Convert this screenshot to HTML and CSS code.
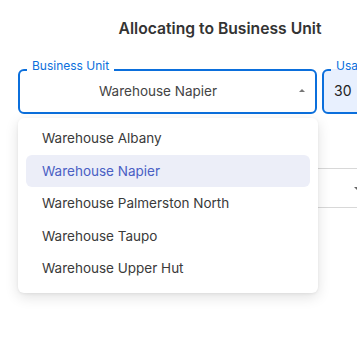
FILE: index.html
```html
<!DOCTYPE html>
<html lang="en">
<head>
  <meta charset="UTF-8" />
  <meta name="viewport" content="width=device-width, initial-scale=1.0" />
  <title>Allocate</title>
  <link rel="stylesheet" href="styles.css">
</head>
<body>
  <div class="page">
    <div class="dialog">
      <h2 class="title">Allocating to Business Unit</h2>
      <div class="fields">
        <fieldset class="field field-unit">
          <legend>Business Unit</legend>
          <div class="value">Warehouse Napier</div>
          <span class="arrow-up"></span>
        </fieldset>
        <fieldset class="field field-usage">
          <legend>Usage</legend>
          <div class="value">30</div>
        </fieldset>

        <ul class="menu">
          <li>Warehouse Albany</li>
          <li class="selected">Warehouse Napier</li>
          <li>Warehouse Palmerston North</li>
          <li>Warehouse Taupo</li>
          <li>Warehouse Upper Hut</li>
        </ul>
      </div>
      <div class="line-row">
        <span class="arrow-down"></span>
      </div>
    </div>
  </div>
</body>
</html>
```

FILE: styles.css
```css
body {
  margin: 0;
  background: #fff;
  font-family: Inter, "Noto Sans", sans-serif;
  color: #333;
}
.page {
  width: 100vw;
  height: 100vh;
  overflow: hidden;
}
.dialog {
  width: 404px;
  padding-left: 18px;
}
.title {
  margin: 0;
  padding-top: 19px;
  height: 20px;
  line-height: 20px;
  text-align: center;
  font-size: 15.7px;
  font-weight: 600;
  color: #333;
}
.fields {
  position: relative;
  display: flex;
  gap: 5px;
  margin-top: 20px;
}
.field {
  margin: 0;
  height: 55px;
  box-sizing: border-box;
  border: 2px solid #0b6fdc;
  border-radius: 6px;
  padding: 0 10px 12px;
  display: flex;
  align-items: center;
}
.field legend {
  font-size: 12px;
  line-height: 14px;
  color: #0b6fdc;
  padding: 0 5px 8px;
  margin-left: -3px;
}
.field-unit {
  width: 299px;
}
.field-unit .value {
  flex: 1;
  margin-right: 13px;
  text-align: center;
  font-size: 13.5px;
  color: #444;
}
.field-usage {
  width: 90px;
  background: #e8f0fe;
}
.field-usage .value {
  font-size: 14px;
  color: #222;
}
.arrow-up {
  border-left: 3px solid transparent;
  border-right: 3px solid transparent;
  border-bottom: 3px solid #777;
}
.menu {
  position: absolute;
  top: 59px;
  left: 0;
  width: 300px;
  box-sizing: border-box;
  margin: 0;
  padding: 4px 8px 8px;
  list-style: none;
  background: #fff;
  border-radius: 6px;
  box-shadow: 0 4px 14px rgba(0, 0, 0, 0.12), 0 1px 3px rgba(0, 0, 0, 0.06);
  z-index: 2;
}
.menu li {
  height: 32.5px;
  line-height: 32.5px;
  padding-left: 16px;
  font-size: 13.5px;
  color: #3a3a3a;
  border-radius: 6px;
}
.menu li.selected {
  background: #eceef8;
  color: #4a5fc4;
}
.line-row {
  margin-top: 54px;
  height: 38px;
  border-top: 1px solid #d8d8d8;
  border-bottom: 1px solid #d8d8d8;
  display: flex;
  align-items: center;
  padding-left: 336px;
}
.arrow-down {
  border-left: 3px solid transparent;
  border-right: 3px solid transparent;
  border-top: 3px solid #666;
}
```
